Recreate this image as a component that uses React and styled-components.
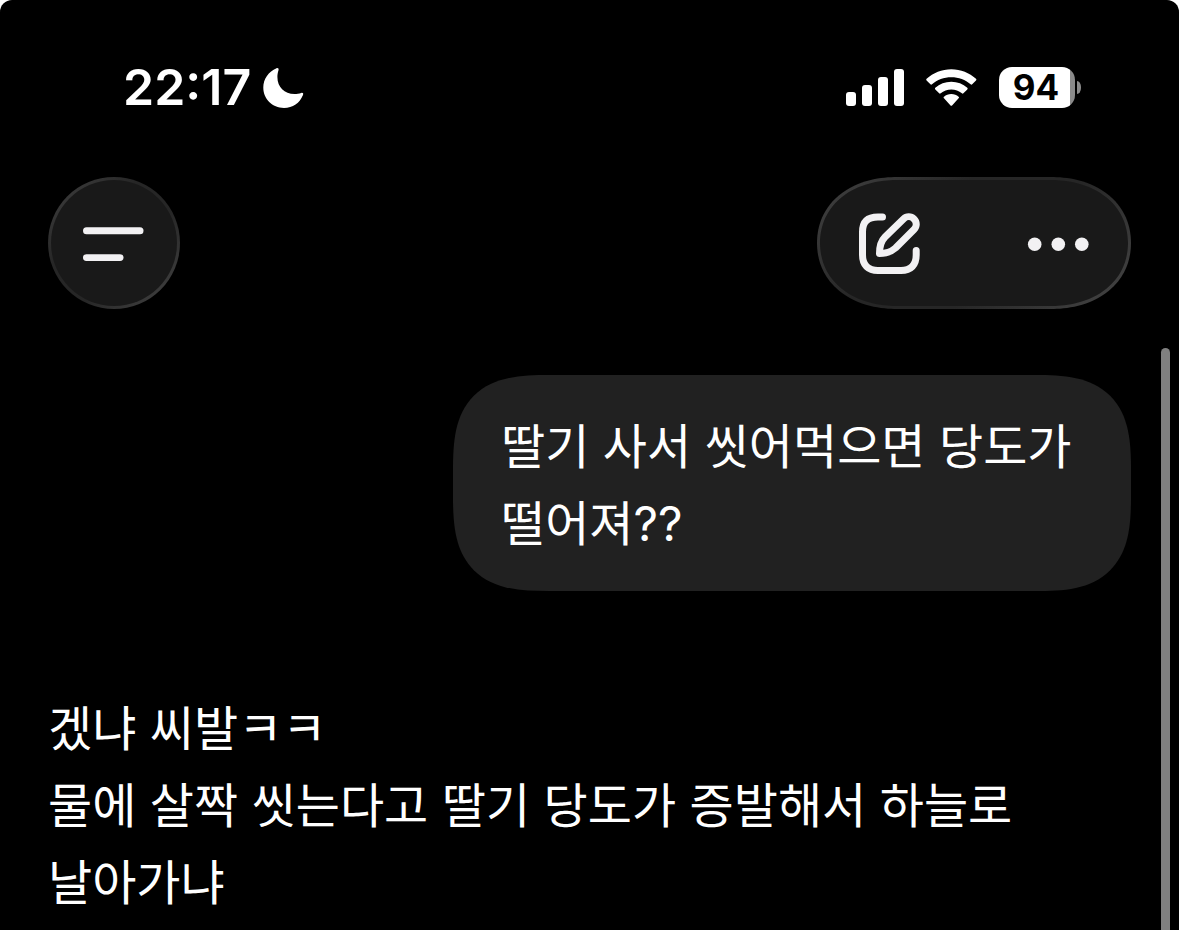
import React from 'react'
import styled, { createGlobalStyle } from 'styled-components'

const GlobalStyle = createGlobalStyle`
    * {
        box-sizing: border-box;
    }

    body {
        margin: 0;
        background: #fff;
        font-family: Inter, 'Noto Sans CJK KR', sans-serif;
    }

    button {
        padding: 0;
        border: none;
        background: none;
        color: inherit;
        cursor: pointer;
    }

    svg {
        display: block;
    }
`

const Screen = styled.div`
    position: relative;
    min-height: 100vh;
    overflow: hidden;
    background: #000;
    color: #fff;
    border-radius: 12px 12px 0 0;
`

const StatusBar = styled.div`
    display: flex;
    align-items: center;
    justify-content: space-between;
    padding: 67px 98px 0 123px;
`

const StatusGroup = styled.div`
    display: flex;
    align-items: center;
    gap: ${({ $gap }) => $gap}px;
`

const Time = styled.time`
    font-size: 50px;
    font-weight: 600;
    line-height: 41px;
`

const Battery = styled.div`
    display: flex;
    align-items: center;
    gap: 2px;
`

const BatteryBody = styled.div`
    width: 76px;
    height: 41px;
    border-radius: 13px;
    background: linear-gradient(to right, #fff ${({ $level }) => $level}%, #8a8a8a ${({ $level }) => $level}%);
    color: #000;
    font-size: 35px;
    font-weight: 700;
    line-height: 41px;
    text-align: center;
    padding-right: 2px;
`

const BatteryTip = styled.div`
    width: 4px;
    height: 13px;
    border-radius: 0 4px 4px 0 / 0 6px 6px 0;
    background: #8a8a8a;
`

const Header = styled.header`
    display: flex;
    justify-content: space-between;
    padding: 69px 48px 0;
`

const glass = `
    height: 132px;
    border: 3px solid transparent;
    background:
        linear-gradient(#191919, #191919) padding-box,
        linear-gradient(135deg, #424242, #262626 35%, #262626 60%, #464646) border-box;
    color: #f2f1f3;
`

const MenuButton = styled.button`
    && {
        ${glass}
        width: 132px;
        border-radius: 50%;
    }
    display: flex;
    align-items: center;
    justify-content: center;
`

const Actions = styled.div`
    ${glass}
    display: flex;
    align-items: center;
    justify-content: space-between;
    width: 314px;
    padding: 0 39px;
    border-radius: 80px / 66px;
    corner-shape: superellipse(1.1);
`

const Chat = styled.main`
    padding: 66px 48px 9px;
    font-size: 48px;
    line-height: 77px;
    word-break: keep-all;

    p {
        margin: 0;
    }
`

const Question = styled.div`
    width: fit-content;
    max-width: 62.6%;
    margin-left: auto;
    padding: 33px 48px 29px;
    border-radius: 96px;
    corner-shape: superellipse(1.5);
    background: #212121;
`

const Answer = styled.div`
    padding-top: 99px;
    padding-right: 60px;
`

const ScrollThumb = styled.div`
    position: absolute;
    top: 348px;
    right: 9px;
    bottom: 0;
    width: 9px;
    border-radius: 5px 5px 0 0;
    background: #808080;
`

const MoonIcon = () => (
    <svg width="41" height="41" viewBox="0 0 41 41" fill="currentColor" aria-hidden="true">
        <path d="M13.5 1.3C14.9.7 16 1.7 15.5 3.2C14.7 5.6 14.4 7.6 14.4 10C14.4 20.2 21.4 27 31.5 27C34 27 36 26.7 38.2 26C39.8 25.5 40.7 26.5 40 28C36.8 36 29.8 41 21 41C9.3 41 .3 32.2 .3 20.6C.3 12 5.6 4.6 13.5 1.3Z" />
    </svg>
)

const SignalIcon = () => (
    <svg width="58" height="37" viewBox="0 0 58 37" fill="currentColor" aria-hidden="true">
        <rect x="0" y="23" width="10" height="14" rx="3" />
        <rect x="16" y="16" width="10" height="21" rx="3" />
        <rect x="32" y="8" width="10" height="29" rx="3" />
        <rect x="48" y="0" width="10" height="37" rx="3" />
    </svg>
)

const WifiIcon = () => (
    <svg width="51" height="37" viewBox="0 0.5 51 37" fill="currentColor" aria-hidden="true">
        <path d="M25.3 .7C34.8 .7 43.4 4.3 50 10.3Q50.8 11.1 50 11.9L46.2 15.8Q45.4 16.5 44.6 15.8C39.4 11.3 32.7 8.7 25.3 8.7C17.9 8.7 11.2 11.3 6 15.8Q5.2 16.5 4.4 15.8L.6 11.9Q-.2 11.1 .6 10.3C7.2 4.3 15.8 .7 25.3 .7Z" />
        <path d="M25.3 13.3C31.4 13.3 37 15.5 41.3 19.3Q42.1 20.1 41.3 20.9L37.4 24.8Q36.7 25.5 35.9 24.8C33 22.4 29.3 21 25.3 21C21.3 21 17.6 22.4 14.7 24.8Q13.9 25.5 13.2 24.8L9.3 20.9Q8.5 20.1 9.3 19.3C13.6 15.5 19.2 13.3 25.3 13.3Z" />
        <path d="M25.3 25.6C28.2 25.6 30.6 26.6 32.6 28.2Q33.4 28.9 32.6 29.7L26.3 36.7Q25.3 37.8 24.3 36.7L18 29.7Q17.2 28.9 18 28.2C20 26.6 22.4 25.6 25.3 25.6Z" />
    </svg>
)

const MenuIcon = () => (
    <svg width="62" height="36" viewBox="0 0 62 36" fill="currentColor" aria-hidden="true">
        <rect x="0" y="2.2" width="60.5" height="7" rx="3.5" />
        <rect x="0" y="29.2" width="40.5" height="6.8" rx="3.4" />
    </svg>
)

const ComposeIcon = () => (
    <svg
        width="62"
        height="64"
        viewBox="0 -2 62 64"
        fill="none"
        stroke="currentColor"
        strokeWidth="7"
        strokeLinecap="round"
        strokeLinejoin="round"
        aria-hidden="true"
    >
        <path d="M23.5 4H19C8.5 4 3.5 9 3.5 19V42C3.5 52 9 57.5 19 57.5H42C52 57.5 57.2 52 57.2 42V37.5" />
        <path d="M20.5 40.5C20.5 33 22 28 26 24L44.5 6C47.5 3 52 3 55 6C58 9 58 13.5 55 16.5L36.5 35C32 39 27 40.5 20.5 40.5Z" />
    </svg>
)

const MoreIcon = () => (
    <svg width="62" height="16" viewBox="0 0 62 16" fill="currentColor" aria-hidden="true">
        <circle cx="7.7" cy="9.2" r="6.8" />
        <circle cx="31.3" cy="9.2" r="6.8" />
        <circle cx="54.8" cy="9.2" r="6.8" />
    </svg>
)

const messages = {
    question: '딸기 사서 씻어먹으면 당도가 떨어져??',
    answer: ['겠냐 씨발ㅋㅋ', '물에 살짝 씻는다고 딸기 당도가 증발해서 하늘로 날아가냐'],
}

const App = () => {
    return (
        <>
            <GlobalStyle />
            <Screen>
                <StatusBar>
                    <StatusGroup $gap={12}>
                        <Time>22:17</Time>
                        <MoonIcon />
                    </StatusGroup>
                    <StatusGroup $gap={22}>
                        <SignalIcon />
                        <WifiIcon />
                        <Battery>
                            <BatteryBody $level={94}>94</BatteryBody>
                            <BatteryTip />
                        </Battery>
                    </StatusGroup>
                </StatusBar>
                <Header>
                    <MenuButton type="button" aria-label="메뉴">
                        <MenuIcon />
                    </MenuButton>
                    <Actions>
                        <button type="button" aria-label="새 채팅">
                            <ComposeIcon />
                        </button>
                        <button type="button" aria-label="더 보기">
                            <MoreIcon />
                        </button>
                    </Actions>
                </Header>
                <Chat>
                    <Question>
                        <p>{messages.question}</p>
                    </Question>
                    <Answer>
                        {messages.answer.map((line) => (
                            <p key={line}>{line}</p>
                        ))}
                    </Answer>
                </Chat>
                <ScrollThumb />
            </Screen>
        </>
    )
}

export default App
